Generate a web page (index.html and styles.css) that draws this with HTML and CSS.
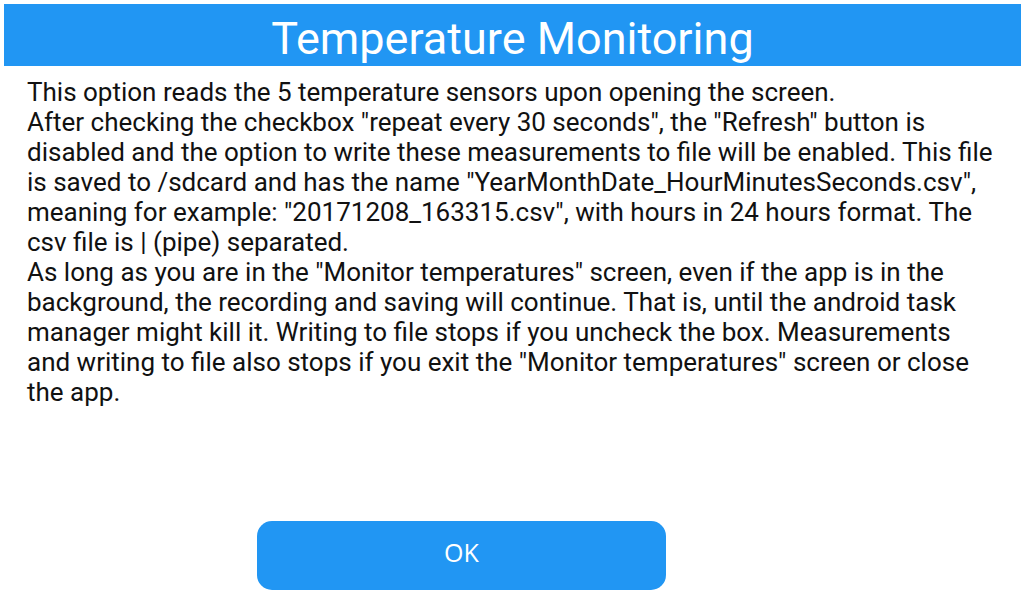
FILE: index.html
```html
<!DOCTYPE html>
<html>
<head>
<meta charset="utf-8">
<link rel="stylesheet" href="styles.css">
</head>
<body>
<div class="screen">
  <header class="title-bar"><h1 class="title">Temperature Monitoring</h1></header>
  <div class="content">
    <p class="para">This option reads the 5 temperature sensors upon opening the screen.</p>
    <p class="para">After checking the checkbox "repeat every 30 seconds", the "Refresh" button is disabled and the option to write these measurements to file will be enabled. This file is saved to /sdcard and has the name "YearMonthDate_HourMinutesSeconds.csv", meaning for example: "20171208_163315.csv", with hours in 24 hours format. The csv file is | (pipe) separated.</p>
    <p class="para">As long as you are in the "Monitor temperatures" screen, even if the app is in the background, the recording and saving will continue. That is, until the android task manager might kill it. Writing to file stops if you uncheck the box. Measurements and writing to file also stops if you exit the "Monitor temperatures" screen or close the app.</p>
  </div>
  <div class="actions"><button class="ok-btn">OK</button></div>
</div>
</body>
</html>
```
FILE: styles.css
```css
html, body { margin: 0; padding: 0; background: #fff; }
.screen { width: 1024px; height: 600px; display: flex; flex-direction: column; overflow: hidden; }
.title-bar { margin: 4px 3px 0 4px; height: 62px; background: #2196F3; display: flex; align-items: center; justify-content: center; }
.title { margin: 0; font-family: Roboto, sans-serif; font-weight: 400; font-size: 45px; color: #fff; line-height: 1; position: relative; top: 3px; }
.content { padding: 11px 27px 0 27px; width: 970px; font-family: Roboto, sans-serif; font-size: 26px; line-height: 30px; color: #111; }
.para { margin: 0; }
.actions { margin-top: auto; padding: 0 0 10px 257px; }
.ok-btn { width: 409px; height: 69px; border: none; border-radius: 15px; background: #2196F3; color: #fff; font-family: "Open Sans", sans-serif; font-size: 25px; padding: 0 0 7px 0; }
```
